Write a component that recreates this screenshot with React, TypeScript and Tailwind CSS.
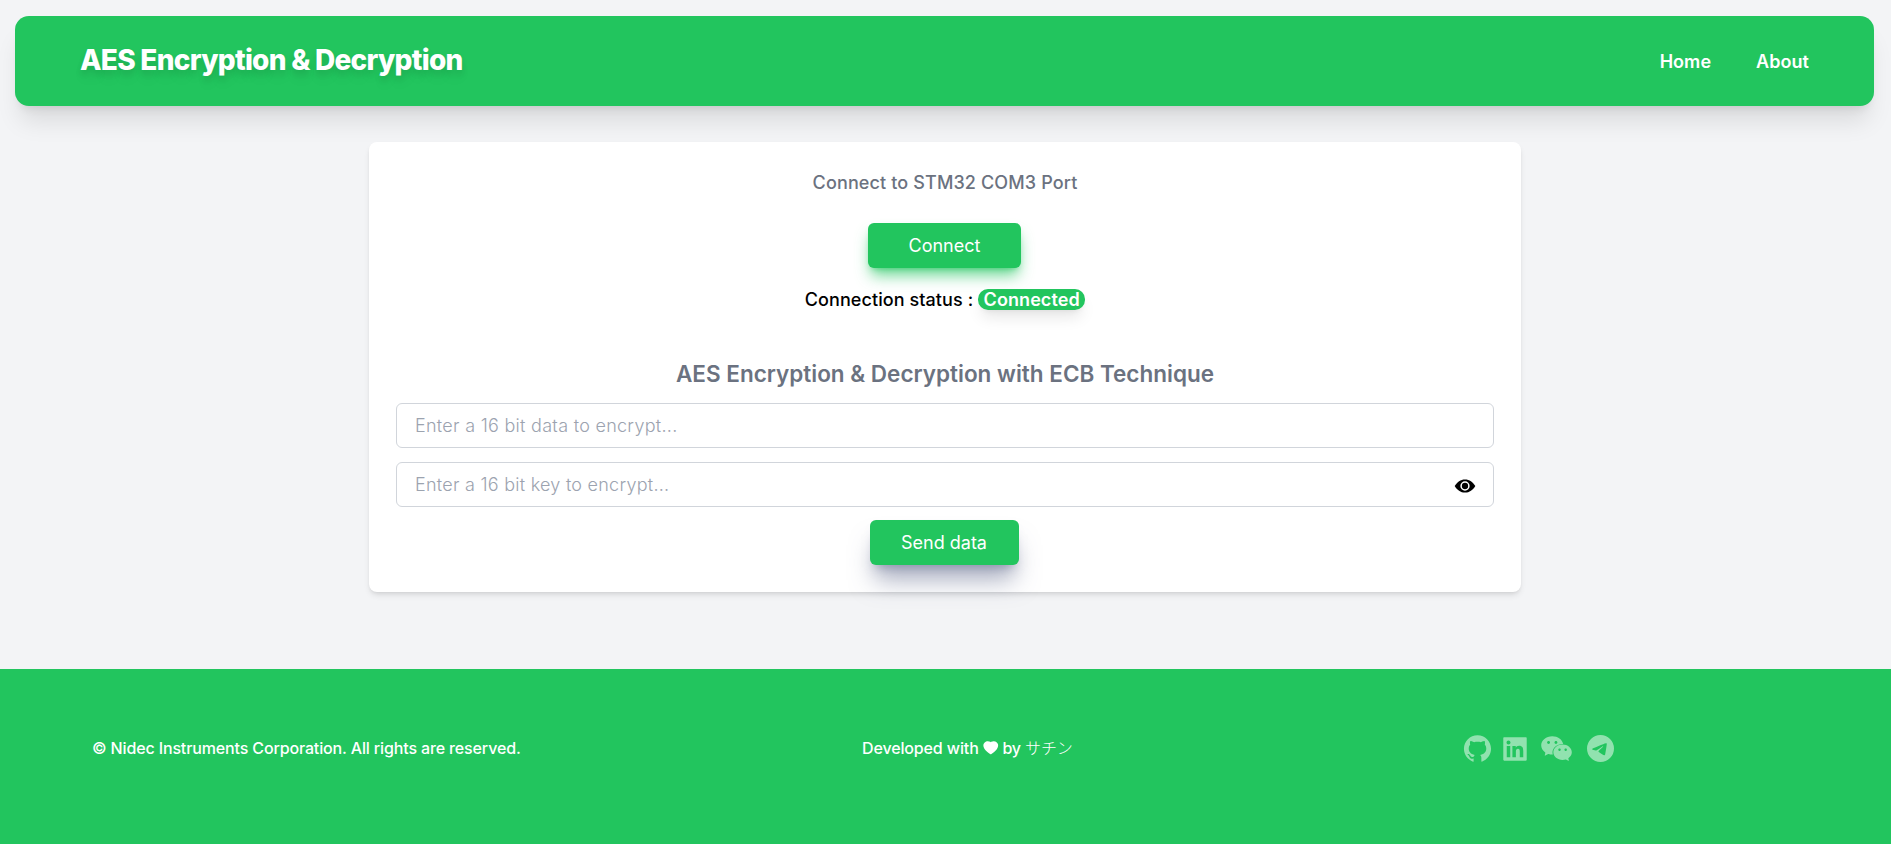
import { AiFillGithub, AiFillLinkedin, AiFillWechat, AiFillHeart } from "react-icons/ai";
import { BsTelegram } from "react-icons/bs";

const font = "font-['Inter','Noto_Sans_CJK_JP',sans-serif]";

function EyeIcon() {
  return (
    <svg viewBox="0 0 24 24" className="mt-[3px] size-6 shrink-0">
      <path d="M1.7 12C4 8 7.6 5.4 12 5.4S20 8 22.3 12C20 16 16.4 18.6 12 18.6S4 16 1.7 12Z" fill="#000" />
      <circle cx="12" cy="12" r="3.9" fill="#000" stroke="#fff" strokeWidth="1.5" />
    </svg>
  );
}

function Header() {
  return (
    <header className="mt-4 mr-[17px] ml-[15px] flex h-[90px] items-center justify-between rounded-[14px] bg-[#22c55e] pr-[65px] pl-[65px] font-bold text-white shadow-xl">
      <h1 className="pb-0.5 text-[28px] leading-9 font-extrabold tracking-[-0.72px] [text-shadow:0_4px_6px_#0000001a,0_10px_12px_#0000000a]">
        AES Encryption &amp; Decryption
      </h1>
      <nav className="flex gap-[45px] pt-0.5 text-[18px] leading-7 font-semibold tracking-[0.05px]">
        <a>Home</a>
        <a>About</a>
      </nav>
    </header>
  );
}

function Panel() {
  return (
    <main className="mt-9 ml-[369px] flex h-[450px] w-[1152px] flex-col items-center rounded-lg bg-white px-[27px] shadow-md">
      <p className="mt-[27px] text-[18px] leading-7 font-medium tracking-[0.13px] text-[#6b7280]">Connect to STM32 COM3 Port</p>
      <button className="mt-[26px] mr-px h-[45px] w-[153px] shrink-0 rounded-md bg-[#22c55e] text-[18px] text-white shadow-[0_10px_15px_-3px_#22c55eb0,0_4px_6px_-4px_#22c55eb0]">
        Connect
      </button>
      <p className="mt-[18px] text-[18px] leading-7 font-medium tracking-[0.08px] text-black">
        Connection status :{" "}
        <span className="rounded-[10px] bg-[#22c55e] px-[5.5px] font-semibold text-white shadow-lg">Connected</span>
      </p>
      <h2 className="mt-[44px] text-[22.5px] leading-8 font-semibold text-[#6b7280]">
        AES Encryption &amp; Decryption with ECB Technique
      </h2>
      <input
        className="mt-[13px] h-[45px] w-full shrink-0 rounded-md border border-[#d1d5db] px-[18px] text-[18px] font-light tracking-[0.28px] placeholder:text-[#9ca3af]"
        placeholder="Enter a 16 bit data to encrypt..."
      />
      <div className="mt-3.5 flex h-[45px] w-full shrink-0 items-center rounded-md border border-[#d1d5db] pr-4 pl-[18px]">
        <input
          className="flex-1 text-[18px] font-light tracking-[0.25px] placeholder:text-[#9ca3af]"
          placeholder="Enter a 16 bit key to encrypt..."
        />
        <EyeIcon />
      </div>
      <button className="mt-[13px] mr-[2px] h-[45px] w-[149px] shrink-0 rounded-md bg-[#22c55e] text-[18px] text-white shadow-[0_20px_25px_-5px_#5b658a80,0_8px_10px_-6px_#5b658a80]">
        Send data
      </button>
    </main>
  );
}

function Footer() {
  return (
    <footer className="mt-[77px] flex h-[175px] items-center bg-[#22c55e] pb-4 pl-[92px] text-[16px] font-medium text-white">
      <p className="w-[770px] pb-0.5 tracking-[-0.14px]">© Nidec Instruments Corporation. All rights are reserved.</p>
      <p className="w-[600px] pb-0.5 tracking-[-0.13px]">
        Developed with <AiFillHeart className="-mx-px inline size-[17.5px] align-[-3px]" /> by{" "}
        <span className="font-light">サチン</span>
      </p>
      <div className="flex items-center text-white/50">
        <AiFillGithub className="size-[31px]" />
        <AiFillLinkedin className="ml-[7px] size-[30px]" />
        <AiFillWechat className="ml-[9px] size-[35px]" />
        <BsTelegram className="ml-[13px] size-[27px]" />
      </div>
    </footer>
  );
}

export default function App() {
  return (
    <div className={`${font} flow-root h-[844px] overflow-hidden bg-[#f3f4f6]`}>
      <Header />
      <Panel />
      <Footer />
    </div>
  );
}
